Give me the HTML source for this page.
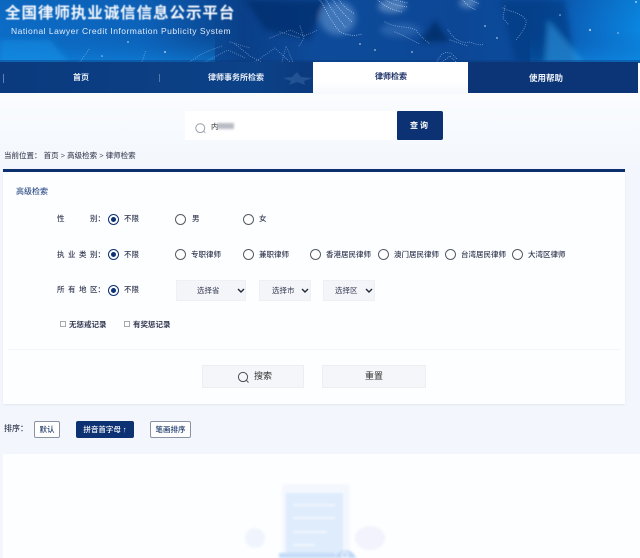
<!DOCTYPE html>
<html lang="zh"><head><meta charset="utf-8"><title>全国律师执业诚信信息公示平台</title>
<style>
*{box-sizing:border-box}
html,body{margin:0;padding:0}
body{width:640px;height:558px;overflow:hidden;position:relative;background:linear-gradient(#fafcfe 93px,#f3f7fd 170px);font-family:"Liberation Sans","Noto Sans CJK SC",sans-serif;color:#333}
.a{position:absolute;white-space:nowrap}
.t{font-size:7.5px;line-height:12px;color:#343a52;font-weight:500;filter:blur(.35px)}
.r{position:absolute;width:11px;height:11px;border:1px solid #555b66;border-radius:50%;background:#fff}
.r.on{border-color:#0c3273}
.r.on:after{content:"";position:absolute;left:2px;top:2px;width:5px;height:5px;background:#0c3273;border-radius:50%}
.sel{position:absolute;height:21px;top:280px;background:#f4f5f8;border:1px solid #eef0f4;font-size:7.5px;line-height:19px;color:#343a52;filter:blur(.25px)}
.sel svg{position:absolute;top:7px}
.cb{position:absolute;width:6px;height:6px;border:1px solid #a5a9b2;background:#fff;top:321px}
.btn{position:absolute;height:23px;top:365px;background:#f5f6f9;border:1px solid #eceef2;font-size:9px;line-height:21px;text-align:center;color:#333;filter:blur(.25px)}
.sort{position:absolute;top:421px;height:17px;border:1px solid #8b93a3;border-radius:2px;background:#fff;font-size:7.5px;line-height:15px;text-align:center;color:#1e3a6b;font-weight:500;filter:blur(.25px)}
</style></head><body>

<svg class="a" style="left:0;top:0" width="640" height="63" viewBox="0 0 640 63">
<defs>
<linearGradient id="g" x1="0" x2="1" y1="0" y2="0">
<stop offset="0" stop-color="#0c6cc6"/><stop offset=".22" stop-color="#0c63ba"/><stop offset=".38" stop-color="#0a3f88"/><stop offset=".5" stop-color="#0d4b9a"/><stop offset=".72" stop-color="#0c4796"/><stop offset=".84" stop-color="#0a4c9e"/><stop offset=".92" stop-color="#0b6ac4"/><stop offset="1" stop-color="#0a86e0"/></linearGradient>
<linearGradient id="v" x1="0" x2="0" y1="0" y2="1"><stop offset="0" stop-color="#0b3f88" stop-opacity=".12"/><stop offset=".5" stop-color="#0b60b6" stop-opacity="0"/><stop offset="1" stop-color="#0f8ae4" stop-opacity=".6"/></linearGradient>
<filter id="b"><feGaussianBlur stdDeviation="3"/></filter>
<filter id="b2"><feGaussianBlur stdDeviation=".35"/></filter></defs>
<rect width="640" height="63" fill="url(#g)"/>
<rect x="0" y="0" width="215" height="63" fill="url(#v)"/>
<rect x="530" y="0" width="110" height="63" fill="url(#v)"/>
<g filter="url(#b)">
<path d="M245 0H325L310 40L265 30Z" fill="#082f6e" opacity=".75"/>
<path d="M500 0H565L575 63H515Z" fill="#08387e" opacity=".6"/>
<path d="M0 63L0 40L50 40L70 63Z" fill="#1a94ea" opacity=".5"/>
<path d="M545 63L548 20L585 63Z" fill="#2a9ae6" opacity=".55"/>
<ellipse cx="338" cy="18" rx="18" ry="17" fill="#8db7e8" opacity=".4"/>
<ellipse cx="392" cy="6" rx="14" ry="7" fill="#b9d2f0" opacity=".4"/>
<ellipse cx="468" cy="3" rx="9" ry="5" fill="#b9d2f0" opacity=".4"/>
<ellipse cx="400" cy="30" rx="20" ry="7" fill="#5f95d6" opacity=".3"/>
<path d="M420 42L435 20L450 42Z" fill="#062a66" opacity=".8"/>
</g>
<rect x="0" y="60" width="640" height="3" fill="#0a3a7c" opacity=".45"/>
<g fill="none" stroke="#cfe2f8" stroke-linecap="round" stroke-dasharray="0 2.2" stroke-width=".9" filter="url(#b2)">
<g opacity=".95">
<path d="M320 0C326 10 330 20 340 32C348 36 356 36 362 34"/><path d="M326 0C332 10 338 18 346 28"/><path d="M333 0C338 8 344 14 352 22"/><path d="M339 0C343 6 348 10 355 14"/>
<path d="M378 0C384 6 392 10 402 12"/><path d="M386 0C392 4 398 6 408 7"/><path d="M394 0L408 3"/>
<path d="M463 0C466 4 470 8 477 10"/><path d="M470 0L480 4"/>
</g>
<g opacity=".7">
<path d="M385 22C395 28 408 26 416 30C420 36 425 40 430 44"/><path d="M395 32C405 36 412 40 420 44"/>
<path d="M448 30C452 36 458 44 470 42C476 44 480 46 484 44"/><path d="M450 40L468 46"/>
<path d="M437 62C440 54 446 50 452 54L458 60"/><path d="M442 62L450 56L456 62"/>
<path d="M503 8C510 12 520 12 526 20C527 26 522 32 516 40"/><path d="M505 6L503 18L508 24"/>
</g>
<g opacity=".6">
<path d="M190 62C200 54 210 50 222 46"/><path d="M205 62L228 50L245 58"/><path d="M235 44L250 56L262 62"/><path d="M255 62L275 48L290 62"/><path d="M282 62L286 46L293 62"/><path d="M270 38L290 30L304 36L318 30"/><path d="M142 62L146 50"/><path d="M80 62L90 48"/><path d="M280 32L300 38"/><path d="M230 42L250 48"/><path d="M300 26L304 38L299 46"/>
</g>
</g>
<g fill="#bcd8f6" opacity=".85" filter="url(#b2)">
<circle cx="128" cy="42" r=".9"/><circle cx="165" cy="52" r="1"/><circle cx="102" cy="56" r=".8"/><circle cx="360" cy="44" r=".9"/><circle cx="375" cy="50" r=".9"/><circle cx="412" cy="52" r=".9"/><circle cx="485" cy="26" r=".9"/><circle cx="497" cy="38" r=".9"/><circle cx="590" cy="30" r="1.1"/><circle cx="618" cy="33" r=".8"/><circle cx="636" cy="2" r="1"/><circle cx="560" cy="15" r=".8"/>
</g>
</svg>

<div class="a" style="left:5px;top:3px;font-size:15.5px;line-height:22px;font-weight:700;color:#f4f7fc;letter-spacing:.95px;filter:blur(.4px)">全国律师执业诚信信息公示平台</div>
<div class="a" style="left:11px;top:25px;font-size:8.5px;line-height:12px;color:#e2ecf9;letter-spacing:.48px;filter:blur(.3px)">National Lawyer Credit Information Publicity System</div>

<div class="a" style="left:0;top:62px;width:638px;height:31px;background:linear-gradient(90deg,#0b3a7e 0,#0c4288 40%,#0b3a7e 48%,#0b3577 100%)"></div>
<div class="a" style="left:3px;top:74px;width:1px;height:9px;background:#5f83b5"></div>
<div class="a" style="left:159px;top:74px;width:1px;height:8px;background:#4f78ad"></div>
<div class="a" style="left:623px;top:74px;width:1px;height:9px;background:#5f83b5"></div>
<svg class="a" style="left:280px;top:70px" width="34" height="16"><path d="M3 8L12 7L17 2L21 7L33 8L24 11L25 15L17 12L9 15L11 11Z" fill="#2b5b99" opacity=".75"/></svg>
<div class="a" style="left:313px;top:62px;width:155px;height:32px;background:linear-gradient(#fff 60%,#f5f8fd)"></div>
<div class="a" style="left:468px;top:62px;width:170px;height:31px;background:#0b3577"></div>
<div class="a t" style="left:64px;top:71.5px;width:34px;text-align:center;font-size:8px;color:#e8eef8;font-weight:700">首页</div>
<div class="a t" style="left:196px;top:71.5px;width:80px;text-align:center;font-size:8px;color:#e8eef8;font-weight:700">律师事务所检索</div>
<div class="a t" style="left:351px;top:71px;width:80px;text-align:center;font-size:8px;color:#1a2f66;font-weight:700">律师检索</div>
<div class="a t" style="left:506px;top:71.5px;width:80px;text-align:center;font-size:8.5px;color:#eef3fa;font-weight:700">使用帮助</div>

<div class="a" style="left:185px;top:111px;width:212px;height:29px;background:#fff"></div>
<svg class="a" style="left:194px;top:122px" width="14" height="13" fill="none" stroke="#9aa3ad" stroke-width="1"><path d="M10 9.5l1.3 1.3M6.2 1.7a4.4 4.4 0 1 0 .1 0Z"/></svg>
<div class="a t" style="left:211px;top:121px;color:#555">内</div>
<div class="a" style="left:217px;top:123px;width:17px;height:6px;background:#b9bcc4;filter:blur(1px)"></div>
<div class="a" style="left:397px;top:111px;width:46px;height:29px;background:#0c3273;border-radius:1px 2px 2px 1px;color:#fff;font-size:8px;font-weight:700;line-height:29px;text-align:center;letter-spacing:2px;filter:blur(.2px)">查询</div>

<div class="a t" style="left:4px;top:150px;color:#4a4f60">当前位置： 首页 &gt; 高级检索 &gt; 律师检索</div>

<div class="a" style="left:3px;top:169px;width:622px;height:235px;background:#fdfeff;border-top:3px solid #0c2f6e;box-shadow:0 1px 2px #e2e7ef"></div>
<div class="a t" style="left:16px;top:186px;font-size:8px;color:#31508a">高级检索</div>

<div class="a t" style="left:57px;top:213px;width:48px;display:flex;justify-content:space-between"><span>性</span><span>别：</span></div>
<div class="a t" style="left:57px;top:248.5px;width:48px;display:flex;justify-content:space-between"><span>执</span><span>业</span><span>类</span><span>别：</span></div>
<div class="a t" style="left:57px;top:284px;width:48px;display:flex;justify-content:space-between"><span>所</span><span>有</span><span>地</span><span>区：</span></div>

<div class="r on" style="left:108px;top:214px"></div><div class="a t" style="left:124px;top:213px">不限</div>
<div class="r" style="left:175px;top:214px"></div><div class="a t" style="left:192px;top:213px">男</div>
<div class="r" style="left:243px;top:214px"></div><div class="a t" style="left:259px;top:213px">女</div>

<div class="r on" style="left:108px;top:249px"></div><div class="a t" style="left:124px;top:248.5px">不限</div>
<div class="r" style="left:175px;top:249px"></div><div class="a t" style="left:191px;top:248.5px">专职律师</div>
<div class="r" style="left:243px;top:249px"></div><div class="a t" style="left:259px;top:248.5px">兼职律师</div>
<div class="r" style="left:310px;top:249px"></div><div class="a t" style="left:326px;top:248.5px">香港居民律师</div>
<div class="r" style="left:378px;top:249px"></div><div class="a t" style="left:394px;top:248.5px">澳门居民律师</div>
<div class="r" style="left:445px;top:249px"></div><div class="a t" style="left:461px;top:248.5px">台湾居民律师</div>
<div class="r" style="left:512px;top:249px"></div><div class="a t" style="left:528px;top:248.5px">大湾区律师</div>

<div class="r on" style="left:108px;top:285px"></div><div class="a t" style="left:124px;top:284px">不限</div>

<div class="sel" style="left:176px;width:70px;padding-left:20px">选择省<svg style="left:60px" width="8" height="6" fill="none" stroke="#222b3a" stroke-width="1.4"><path d="M1 1l3 3 3-3"/></svg></div>
<div class="sel" style="left:259px;width:52px;padding-left:12px">选择市<svg style="left:41px" width="8" height="6" fill="none" stroke="#222b3a" stroke-width="1.4"><path d="M1 1l3 3 3-3"/></svg></div>
<div class="sel" style="left:323px;width:52px;padding-left:11px">选择区<svg style="left:41px" width="8" height="6" fill="none" stroke="#222b3a" stroke-width="1.4"><path d="M1 1l3 3 3-3"/></svg></div>

<div class="cb" style="left:60px"></div><div class="a t" style="left:69px;top:318.5px;font-weight:700">无惩戒记录</div>
<div class="cb" style="left:124px"></div><div class="a t" style="left:133px;top:318.5px;font-weight:700">有奖惩记录</div>

<div class="a" style="left:8px;top:349px;width:612px;height:1px;background:#f3f5f9"></div>

<div class="btn" style="left:202px;width:102px;padding-left:20px">搜索</div>
<svg class="a" style="left:237px;top:371px" width="13" height="13" fill="none" stroke="#4a505c" stroke-width="1"><circle cx="6" cy="6" r="4.6"/><path d="M9.5 9.5l2 2"/></svg>
<div class="btn" style="left:322px;width:104px">重置</div>

<div class="a t" style="left:4px;top:423px;font-size:8px">排序：</div>
<div class="sort" style="left:34px;width:26px">默认</div>
<div class="sort" style="left:76px;width:58px;background:#0c3273;border-color:#0c3273;color:#fff">拼音首字母 <b>↑</b></div>
<div class="sort" style="left:150px;width:41px">笔画排序</div>

<div class="a" style="left:3px;top:454px;width:637px;height:104px;background:#fdfeff"></div>
<svg class="a" style="left:230px;top:480px;filter:blur(1px)" width="170" height="78">
<rect x="52" y="4" width="68" height="70" fill="#f4f8fe"/>
<rect x="56" y="13" width="57" height="64" fill="#dfecfc"/>
<g fill="#f3f8fe"><rect x="63" y="24" width="42" height="2"/><rect x="63" y="37" width="42" height="2"/><rect x="63" y="51" width="34" height="2"/><rect x="63" y="64" width="22" height="2"/></g>
<rect x="49" y="73" width="56" height="5" fill="#c4dcf8"/>
<circle cx="25" cy="58" r="10" fill="#f0f5fd"/>
<ellipse cx="140" cy="58" rx="15" ry="12" fill="#f2f3fd"/>
<path d="M105 78a11 11 0 0 1 21 0Z" fill="#c0d8f5"/><circle cx="115" cy="75" r="3" fill="none" stroke="#eef5fd" stroke-width="1.4"/>
</svg>
</body></html>
